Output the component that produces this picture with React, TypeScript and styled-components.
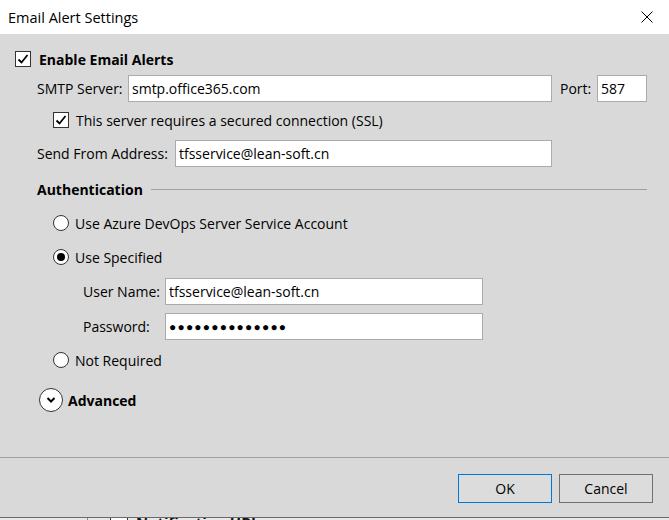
import React from 'react';
import styled, { createGlobalStyle } from 'styled-components';

const Global = createGlobalStyle`
  html, body { margin: 0; padding: 0; background: #d9d9d9; }
  body { font-family: "Open Sans", "Noto Sans", sans-serif; }
`;

const FONT = `"Open Sans", "Noto Sans", sans-serif`;

const Window = styled.div`
  width: 669px;
  height: 520px;
  display: flex;
  flex-direction: column;
  overflow: hidden;
  background: #d9d9d9;
  color: #000;
  font-family: ${FONT};
  font-size: 14px;
`;

const TitleBar = styled.div`
  height: 34px;
  flex: none;
  background: #fff;
  display: flex;
  align-items: center;
  justify-content: space-between;
  padding: 0 16px 0 8px;
  box-sizing: border-box;
`;

const Title = styled.span`
  font-size: 14.5px;
  color: #000;
`;

const Body = styled.div`
  height: 423px;
  flex: none;
  box-sizing: border-box;
  padding: 13px 22px 0 15px;
  display: flex;
  flex-direction: column;
`;

const Row = styled.div<{ $top?: number; $indent?: number; $h?: number }>`
  display: flex;
  align-items: center;
  height: ${(p) => p.$h ?? 24}px;
  margin-top: ${(p) => p.$top ?? 0}px;
  padding-left: ${(p) => p.$indent ?? 0}px;
  flex: none;
`;

const Box = styled.span`
  width: 16px;
  height: 16px;
  box-sizing: border-box;
  border: 1px solid #333;
  background: #fff;
  display: inline-flex;
  align-items: center;
  justify-content: center;
  flex: none;
`;

const Radio = styled.span<{ $on?: boolean }>`
  width: 16px;
  height: 16px;
  box-sizing: border-box;
  border: 1px solid #333;
  border-radius: 50%;
  background: #fff;
  display: inline-flex;
  align-items: center;
  justify-content: center;
  flex: none;
  &::after {
    content: '';
    width: 8px;
    height: 8px;
    border-radius: 50%;
    background: ${(p) => (p.$on ? '#000' : 'transparent')};
  }
`;

const Text = styled.span<{ $gap?: number; $bold?: boolean }>`
  margin-left: ${(p) => p.$gap ?? 0}px;
  font-weight: ${(p) => (p.$bold ? 700 : 400)};
  white-space: nowrap;
`;

const Label = styled.span<{ $w: number }>`
  width: ${(p) => p.$w}px;
  flex: none;
  white-space: nowrap;
`;

const TextBox = styled.div<{ $w: number; $secret?: boolean }>`
  width: ${(p) => p.$w}px;
  height: 27px;
  box-sizing: border-box;
  border: 1px solid #ababab;
  background: #fff;
  padding: 0 3px;
  display: flex;
  align-items: center;
  flex: none;
  white-space: nowrap;
  overflow: hidden;
  font-size: ${(p) => (p.$secret ? '12px' : '14px')};
  letter-spacing: ${(p) => (p.$secret ? '1.2px' : 'normal')};
`;

const PortBox = styled(TextBox)`
  margin-left: auto;
`;

const GroupRule = styled.div`
  flex: 1;
  height: 1px;
  background: #a0a0a0;
  margin-left: 8px;
`;

const Expander = styled.span`
  width: 24px;
  height: 24px;
  box-sizing: border-box;
  border: 1.5px solid #333;
  border-radius: 50%;
  background: #fff;
  display: inline-flex;
  align-items: center;
  justify-content: center;
  flex: none;
`;

const Separator = styled.div`
  height: 1px;
  background: #a0a0a0;
  flex: none;
`;

const Footer = styled.div`
  height: 59px;
  flex: none;
  box-sizing: border-box;
  padding: 16px 16px 0 0;
  display: flex;
  justify-content: flex-end;
  align-items: flex-start;
  gap: 7px;
`;

const Button = styled.button<{ $default?: boolean }>`
  width: 94px;
  height: 29px;
  box-sizing: border-box;
  border: 1px solid ${(p) => (p.$default ? '#0078d7' : '#707070')};
  background: #dcdcdc;
  font-family: ${FONT};
  font-size: 14px;
  color: #000;
  padding: 0;
`;

const WindowEdge = styled.div`
  height: 1px;
  flex: none;
  background: #6a6a6a;
`;

const BehindStrip = styled.div`
  height: 2px;
  flex: none;
  overflow: hidden;
  background: #e8e8e8;
  display: flex;
  align-items: flex-start;
  padding-left: 87px;
`;

const BehindLine = styled.span`
  width: 1px;
  height: 2px;
  background: #888;
  flex: none;
`;

const BehindBox = styled.span`
  width: 16px;
  height: 2px;
  margin-left: 22px;
  background: #fff;
  border-left: 1px solid #333;
  border-right: 1px solid #333;
  flex: none;
`;

const BehindText = styled.span`
  margin-left: 8px;
  font-size: 15px;
  font-weight: 700;
  line-height: 15px;
  margin-top: -3px;
  color: #111;
  white-space: nowrap;
`;

const Check = () => (
  <svg width="12" height="12" viewBox="0 0 12 12">
    <polyline points="1.5,6.5 4.5,9.5 10.5,2" fill="none" stroke="#000" strokeWidth="1.8" />
  </svg>
);

const CloseX = () => (
  <svg width="12" height="12" viewBox="0 0 12 12">
    <path d="M0.5 0.5 L11.5 11.5 M11.5 0.5 L0.5 11.5" stroke="#000" strokeWidth="1" />
  </svg>
);

const Chevron = () => (
  <svg width="14" height="14" viewBox="0 0 14 14">
    <polyline points="3.5,5 7,8.5 10.5,5" fill="none" stroke="#000" strokeWidth="2" />
  </svg>
);

export default function App() {
  return (
    <>
      <Global />
      <Window>
        <TitleBar>
          <Title>Email Alert Settings</Title>
          <CloseX />
        </TitleBar>
        <Body>
          <Row>
            <Box>
              <Check />
            </Box>
            <Text $gap={8} $bold>
              Enable Email Alerts
            </Text>
          </Row>
          <Row $top={4} $indent={22} $h={27}>
            <Label $w={91}>SMTP Server:</Label>
            <TextBox $w={424}>smtp.office365.com</TextBox>
            <Text $gap={8}>Port:</Text>
            <PortBox $w={50}>587</PortBox>
          </Row>
          <Row $top={6} $indent={38}>
            <Box>
              <Check />
            </Box>
            <Text $gap={7}>This server requires a secured connection (SSL)</Text>
          </Row>
          <Row $top={8} $indent={22} $h={27}>
            <Label $w={138}>Send From Address:</Label>
            <TextBox $w={377}>tfsservice@lean-soft.cn</TextBox>
          </Row>
          <Row $top={10} $indent={22}>
            <Text $bold>Authentication</Text>
            <GroupRule />
          </Row>
          <Row $top={10} $indent={38}>
            <Radio />
            <Text $gap={6}>Use Azure DevOps Server Service Account</Text>
          </Row>
          <Row $top={10} $indent={38}>
            <Radio $on />
            <Text $gap={6}>Use Specified</Text>
          </Row>
          <Row $top={9} $indent={68} $h={27}>
            <Label $w={82}>User Name:</Label>
            <TextBox $w={318}>tfsservice@lean-soft.cn</TextBox>
          </Row>
          <Row $top={8} $indent={68} $h={27}>
            <Label $w={82}>Password:</Label>
            <TextBox $w={318} $secret>
              ●●●●●●●●●●●●●●
            </TextBox>
          </Row>
          <Row $top={8} $indent={38}>
            <Radio />
            <Text $gap={6}>Not Required</Text>
          </Row>
          <Row $top={16} $indent={24}>
            <Expander>
              <Chevron />
            </Expander>
            <Text $gap={5} $bold>
              Advanced
            </Text>
          </Row>
        </Body>
        <Separator />
        <Footer>
          <Button $default>OK</Button>
          <Button>Cancel</Button>
        </Footer>
        <WindowEdge />
        <BehindStrip>
          <BehindLine />
          <BehindBox />
          <BehindText>Notification URLs</BehindText>
        </BehindStrip>
      </Window>
    </>
  );
}
